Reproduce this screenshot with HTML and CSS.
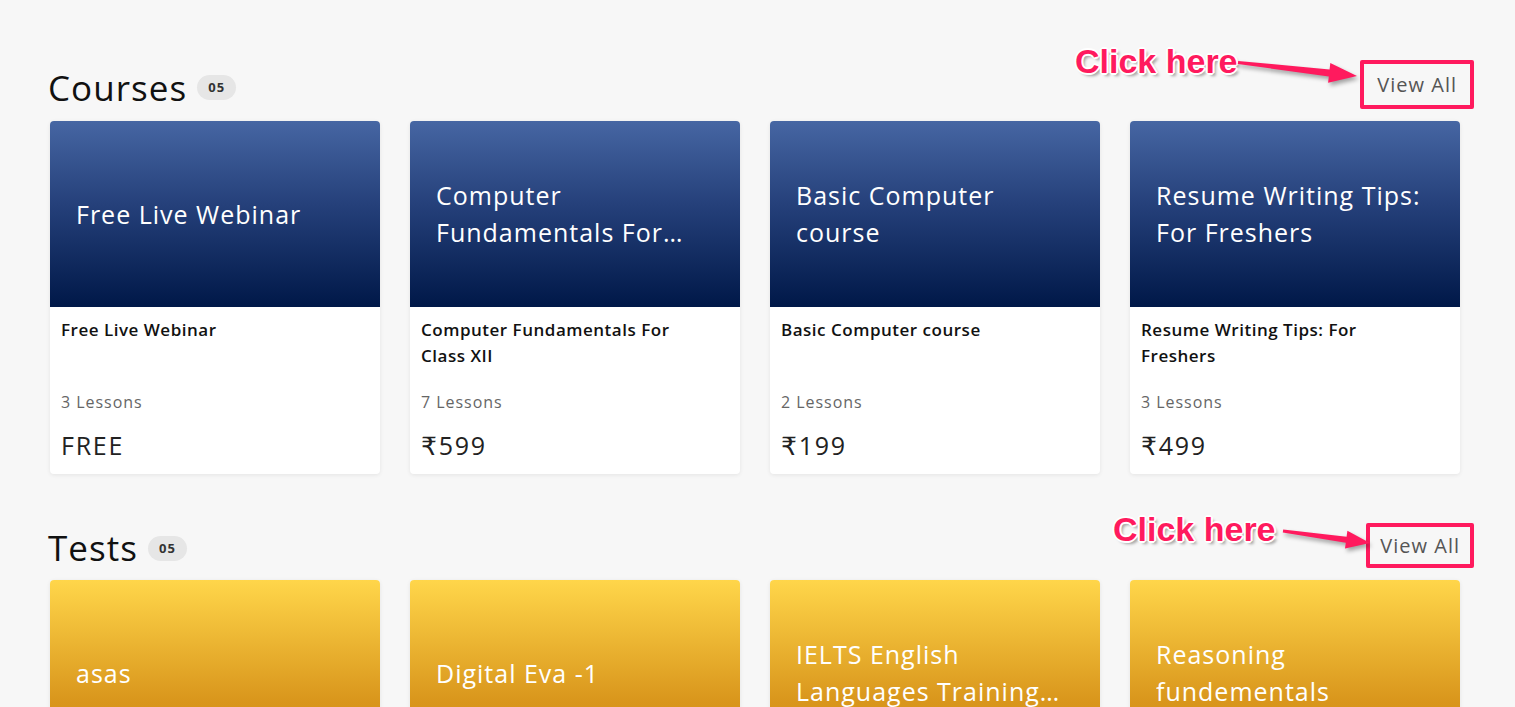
FILE: index.html
```html
<!DOCTYPE html>
<html lang="en">
<head>
  <meta charset="UTF-8">
  <meta name="viewport" content="width=device-width, initial-scale=1.0">
  <title>Courses and Tests</title>
  <link rel="stylesheet" href="styles.css">
</head>
<body>
  <div class="container">

    <section class="section">
      <div class="section-head">
        <h2>Courses <span class="count">05</span></h2>
        <a href="#" class="view-all">View All</a>
        <span class="callout callout-courses">Click here</span>
        <svg class="arrow arrow-courses" width="130" height="35" viewBox="0 0 130 35">
          <polygon points="3.2,8 94.6,16.4 95.3,10 122,23 93.1,29.8 93.8,23.4 2.8,11" fill="#ff1a5e"/>
        </svg>
      </div>

      <div class="card-grid">
        <div class="card">
          <div class="card-cover cover-blue"><p>Free Live Webinar</p></div>
          <div class="card-body">
            <h3>Free Live Webinar</h3>
            <p class="lessons">3 Lessons</p>
            <p class="price">FREE</p>
          </div>
        </div>
        <div class="card">
          <div class="card-cover cover-blue"><p>Computer Fundamentals For Class XII</p></div>
          <div class="card-body">
            <h3>Computer Fundamentals For Class XII</h3>
            <p class="lessons">7 Lessons</p>
            <p class="price">₹599</p>
          </div>
        </div>
        <div class="card">
          <div class="card-cover cover-blue"><p>Basic Computer course</p></div>
          <div class="card-body">
            <h3>Basic Computer course</h3>
            <p class="lessons">2 Lessons</p>
            <p class="price">₹199</p>
          </div>
        </div>
        <div class="card">
          <div class="card-cover cover-blue"><p>Resume Writing Tips: For Freshers</p></div>
          <div class="card-body">
            <h3>Resume Writing Tips: For Freshers</h3>
            <p class="lessons">3 Lessons</p>
            <p class="price">₹499</p>
          </div>
        </div>
      </div>
    </section>

    <section class="section">
      <div class="section-head">
        <h2>Tests <span class="count">05</span></h2>
        <a href="#" class="view-all view-all-sm">View All</a>
        <span class="callout callout-tests">Click here</span>
        <svg class="arrow arrow-tests" width="100" height="32" viewBox="0 0 100 32">
          <polygon points="5.2,7.5 68.6,14.7 69.4,8.8 92,21 67,26.6 67.8,20.7 4.8,10.5" fill="#ff1a5e"/>
        </svg>
      </div>

      <div class="card-grid">
        <div class="card">
          <div class="card-cover cover-yellow"><p>asas</p></div>
        </div>
        <div class="card">
          <div class="card-cover cover-yellow"><p>Digital Eva -1</p></div>
        </div>
        <div class="card">
          <div class="card-cover cover-yellow"><p>IELTS English Languages Training Program</p></div>
        </div>
        <div class="card">
          <div class="card-cover cover-yellow"><p>Reasoning fundementals</p></div>
        </div>
      </div>
    </section>

  </div>
</body>
</html>
```

FILE: styles.css
```css
body {
  margin: 0;
  background-color: #f7f7f7;
  font-family: 'Open Sans', 'DejaVu Sans', sans-serif;
  color: #111;
}

.container {
  padding: 60px 55px 0 50px;
}

.section {
  margin-bottom: 48px;
}

.section-head {
  position: relative;
  display: flex;
  justify-content: space-between;
  align-items: center;
  margin-bottom: 12px;
}

h2 {
  margin: 0 0 0 -2px;
  padding-top: 6px;
  font-size: 35px;
  font-weight: 400;
  line-height: 40px;
  letter-spacing: 0.03em;
  color: #111;
  display: flex;
  align-items: center;
}

.count {
  display: inline-block;
  margin-left: 10px;
  padding: 0 11px;
  height: 25px;
  line-height: 25px;
  border-radius: 13px;
  background-color: #e6e6e6;
  color: #333;
  font-size: 13px;
  font-weight: 700;
  letter-spacing: 0.08em;
}

.view-all {
  margin-right: -14px;
  padding: 8px 13px;
  border: 4px solid #ff1a5e;
  border-radius: 2px;
  color: #555;
  font-size: 20px;
  line-height: 25px;
  letter-spacing: 0.05em;
  text-decoration: none;
}

.view-all-sm {
  padding: 6px 10px;
}

/* annotation overlay */
.callout {
  position: absolute;
  font-family: 'Liberation Sans', Arial, sans-serif;
  font-size: 34px;
  font-weight: 700;
  line-height: 36px;
  color: #ff1a5e;
  text-shadow:
    -2px 0 0 #fff, 2px 0 0 #fff, 0 -2px 0 #fff, 0 2px 0 #fff,
    -1px -1px 0 #fff, 1px 1px 0 #fff, -1px 1px 0 #fff, 1px -1px 0 #fff,
    3px 3px 3px rgba(0, 0, 0, 0.35);
  white-space: nowrap;
}

.callout-courses {
  left: 1025px;
  top: -17px;
}

.callout-tests {
  left: 1063px;
  top: -11px;
}

.arrow {
  position: absolute;
  filter: drop-shadow(2px 3px 2px rgba(0, 0, 0, 0.35));
}

.arrow-courses {
  left: 1185px;
  top: -7px;
}

.arrow-tests {
  left: 1228px;
  top: 0;
}

.card-grid {
  display: grid;
  grid-template-columns: repeat(4, 1fr);
  gap: 30px;
}

.card {
  background-color: #fff;
  border-radius: 4px;
  overflow: hidden;
  box-shadow: 0 1px 4px rgba(0, 0, 0, 0.08);
}

.card-cover {
  height: 186px;
  padding: 0 26px;
  display: flex;
  align-items: center;
}

.card-cover p {
  margin: 0;
  color: #fff;
  font-size: 25px;
  line-height: 37px;
  letter-spacing: 0.04em;
  display: -webkit-box;
  -webkit-line-clamp: 2;
  -webkit-box-orient: vertical;
  overflow: hidden;
}

.cover-blue {
  background: linear-gradient(180deg, #4666a3 0%, #25407a 45%, #001848 100%);
}

.cover-yellow {
  background: linear-gradient(180deg, #ffd64a 0%, #d9961c 65%, #d08a10 100%);
}

.card-body {
  padding: 10px 36px 14px 11px;
}

.card-body h3 {
  margin: 0;
  height: 52px;
  font-size: 17px;
  font-weight: 600;
  line-height: 26px;
  letter-spacing: 0.03em;
  color: #111;
}

.lessons {
  margin: 22px 0 0;
  font-size: 16px;
  line-height: 22px;
  letter-spacing: 0.06em;
  color: #666;
}

.price {
  margin: 17px 0 0;
  font-size: 25px;
  line-height: 30px;
  letter-spacing: 0.07em;
  color: #222;
}
```
